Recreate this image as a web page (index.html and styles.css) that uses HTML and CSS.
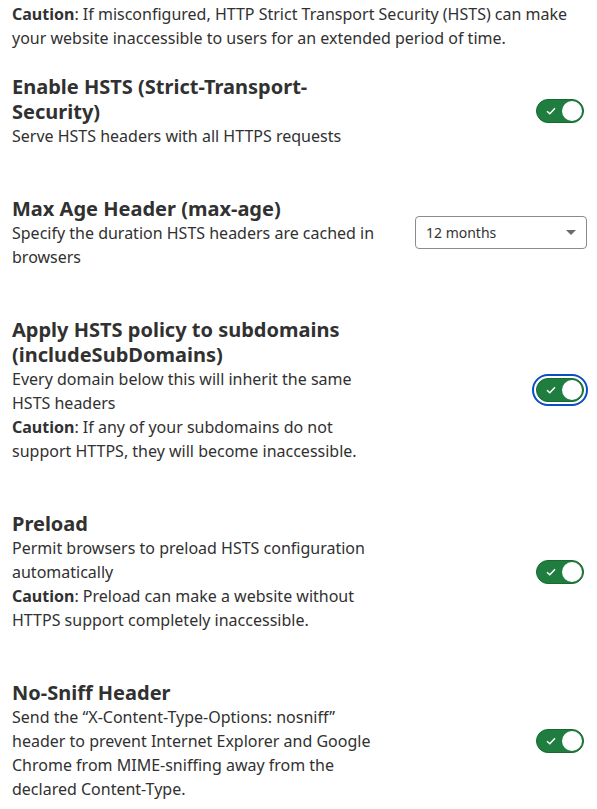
FILE: index.html
```html
<!DOCTYPE html>
<html lang="en">
<head>
<meta charset="utf-8">
<title>HSTS settings</title>
<link rel="stylesheet" href="styles.css">
</head>
<body>
<div class="panel">
  <p class="intro"><strong>Caution</strong>: If misconfigured, HTTP Strict Transport Security (HSTS) can make your website inaccessible to users for an extended period of time.</p>

  <div class="row">
    <div class="info">
      <h3>Enable HSTS (Strict-Transport-Security)</h3>
      <p>Serve HSTS headers with all HTTPS requests</p>
    </div>
    <span class="toggle"><svg class="check" width="10" height="8" viewBox="0 0 10 8"><path d="M1 4.2 L3.8 6.8 L9 1.2" fill="none" stroke="#fff" stroke-width="1.5"/></svg><span class="knob"></span></span>
  </div>

  <div class="row">
    <div class="info">
      <h3>Max Age Header (max-age)</h3>
      <p>Specify the duration HSTS headers are cached in browsers</p>
    </div>
    <div class="select"><span>12 months</span><span class="caret"></span></div>
  </div>

  <div class="row">
    <div class="info">
      <h3>Apply HSTS policy to subdomains (includeSubDomains)</h3>
      <p>Every domain below this will inherit the same HSTS headers</p>
      <p><strong>Caution</strong>: If any of your subdomains do not support HTTPS, they will become inaccessible.</p>
    </div>
    <span class="toggle focused"><svg class="check" width="10" height="8" viewBox="0 0 10 8"><path d="M1 4.2 L3.8 6.8 L9 1.2" fill="none" stroke="#fff" stroke-width="1.5"/></svg><span class="knob"></span></span>
  </div>

  <div class="row">
    <div class="info">
      <h3>Preload</h3>
      <p>Permit browsers to preload HSTS configuration automatically</p>
      <p><strong>Caution</strong>: Preload can make a website without HTTPS support completely inaccessible.</p>
    </div>
    <span class="toggle"><svg class="check" width="10" height="8" viewBox="0 0 10 8"><path d="M1 4.2 L3.8 6.8 L9 1.2" fill="none" stroke="#fff" stroke-width="1.5"/></svg><span class="knob"></span></span>
  </div>

  <div class="row">
    <div class="info">
      <h3>No-Sniff Header</h3>
      <p>Send the “X-Content-Type-Options: nosniff” header to prevent Internet Explorer and Google Chrome from MIME-sniffing away from the declared Content-Type.</p>
    </div>
    <span class="toggle"><svg class="check" width="10" height="8" viewBox="0 0 10 8"><path d="M1 4.2 L3.8 6.8 L9 1.2" fill="none" stroke="#fff" stroke-width="1.5"/></svg><span class="knob"></span></span>
  </div>
</div>
</body>
</html>
```
FILE: styles.css
```css
html, body {
  margin: 0;
  padding: 0;
  background: #ffffff;
}
body {
  font-family: "Noto Sans", "Open Sans", sans-serif;
  color: #313131;
  font-size: 16px;
  line-height: 24px;
}
.panel {
  padding: 2px 10px 0 12px;
  display: flex;
  flex-direction: column;
  gap: 48px;
}
.intro {
  margin: 0 0 -24px 0;
}
p {
  margin: 0;
}
strong {
  font-weight: 700;
}
.row {
  display: flex;
  align-items: center;
  justify-content: space-between;
}
.info {
  width: 372px;
}
h3 {
  margin: 0;
  font-size: 20px;
  line-height: 25px;
  font-weight: 700;
}
.toggle {
  position: relative;
  width: 48px;
  height: 24px;
  box-sizing: border-box;
  background: #1f7d3f;
  border: 1px solid #17692f;
  border-radius: 12px;
  display: flex;
  align-items: center;
  margin-right: 3px;
}
.toggle.focused {
  outline: 2px solid #0a4fc0;
  outline-offset: 2px;
}
.check {
  display: block;
  margin-left: 9px;
}
.knob {
  position: absolute;
  right: 1px;
  top: 1px;
  width: 20px;
  height: 20px;
  border-radius: 50%;
  background: #fff;
}
.select {
  width: 172px;
  height: 33px;
  box-sizing: border-box;
  border: 1px solid #8c8c8c;
  border-radius: 4px;
  display: flex;
  align-items: center;
  justify-content: space-between;
  padding: 0 10px 0 10px;
  font-size: 14px;
  color: #333;
}
.caret {
  width: 0;
  height: 0;
  border-left: 5px solid transparent;
  border-right: 5px solid transparent;
  border-top: 5px solid #6b6b6b;
}
```
